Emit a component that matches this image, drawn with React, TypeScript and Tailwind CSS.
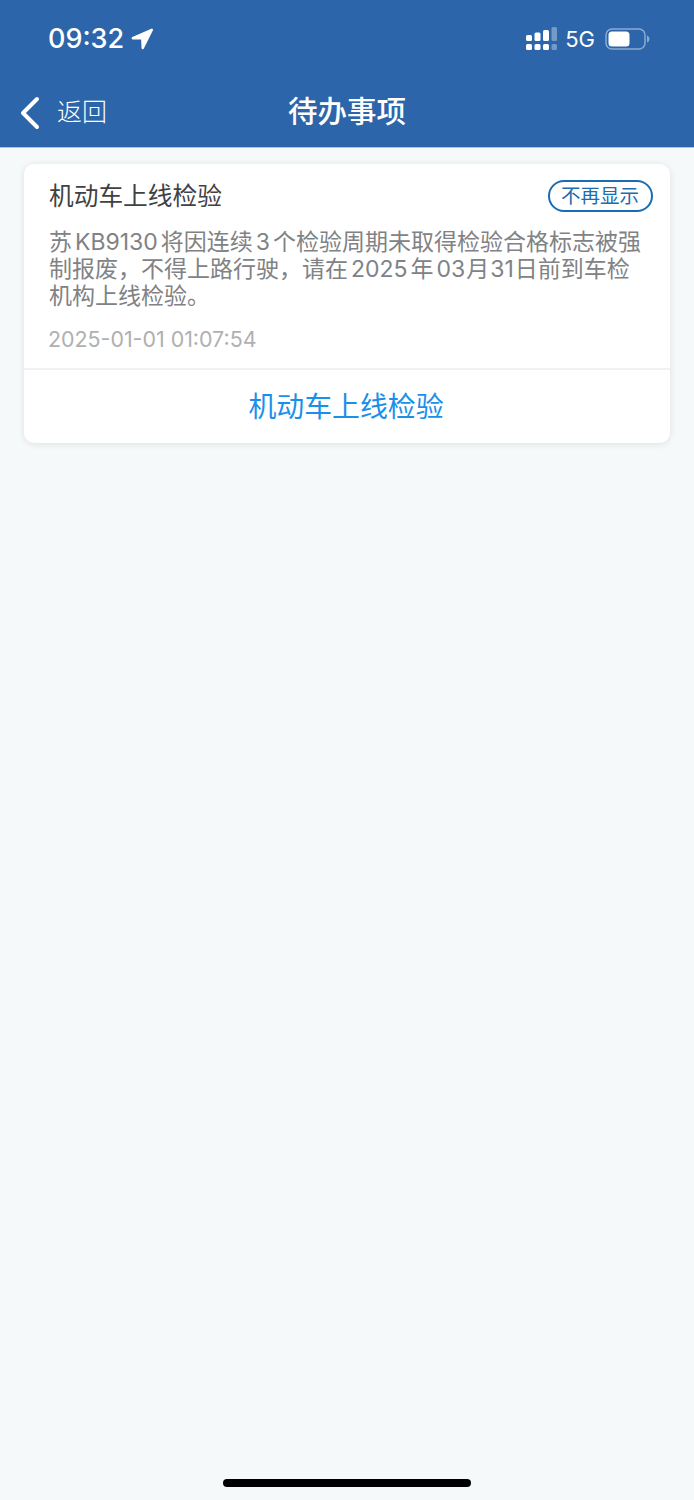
import React from 'react';

const FONT = "font-['Inter','Noto_Sans_CJK_SC',sans-serif]";

const SignalIcon = () => (
  <svg width="32" height="24" viewBox="0 0 32 24" fill="white">
    <rect x="0" y="8" width="6" height="6" rx="1.5" />
    <rect x="0" y="17" width="6" height="6" rx="1.5" />
    <rect x="8.5" y="5.5" width="6" height="8.5" rx="1.5" />
    <rect x="8.5" y="17" width="6" height="6" rx="1.5" />
    <rect x="17" y="3" width="6" height="11" rx="1.5" />
    <rect x="17" y="17" width="6" height="6" rx="1.5" />
    <rect x="25.5" y="0" width="5.5" height="14" rx="1.5" opacity="0.35" />
    <rect x="25.5" y="17" width="5.5" height="6" rx="1.5" opacity="0.35" />
  </svg>
);

const BatteryIcon = () => (
  <svg width="46" height="22" viewBox="0 0 46 22" fill="none">
    <rect x="2" y="1" width="39" height="20" rx="6" stroke="white" strokeOpacity="0.45" strokeWidth="1.5" />
    <rect x="4.5" y="3.5" width="21" height="15" rx="3.5" fill="white" />
    <path d="M43 7.5c1.5.5 2.5 2 2.5 3.5s-1 3-2.5 3.5z" fill="white" fillOpacity="0.45" />
  </svg>
);

const LocationArrow = () => (
  <svg width="22" height="22" viewBox="0 0 22 22" fill="white" stroke="white" strokeWidth="1.2" strokeLinejoin="round">
    <path d="M20.6 1.2 1.6 9.6c-.6.3-.4 1.2.3 1.2l8.9.2.3 9c0 .7.9.9 1.2.3L21.4 2c.2-.5-.3-1-.8-.8z" />
  </svg>
);

const BackChevron = () => (
  <svg width="22" height="34" viewBox="0 0 22 34" fill="none">
    <path d="M18 3 4 17l14 14" stroke="white" strokeWidth="4" strokeLinecap="round" strokeLinejoin="round" />
  </svg>
);

const App: React.FC = () => {
  return (
    <div className={`${FONT} flex h-[1500px] w-[694px] flex-col overflow-hidden bg-[#f5f9fa]`}>
      <header className="h-[148px] shrink-0 border-b border-[#a9c5e4] bg-[#2c65a9] text-white">
        <div className="flex h-[78px] items-center justify-between pb-[1px] pl-[48px] pr-[44px]">
          <div className="flex items-center gap-[7px]">
            <span className="text-[27px] font-medium leading-none">09:32</span>
            <LocationArrow />
          </div>
          <div className="flex items-center">
            <SignalIcon />
            <span className="ml-[7px] mr-[9px] text-[22px] leading-none">5G</span>
            <BatteryIcon />
          </div>
        </div>
        <div className="relative flex h-[69px] items-center pl-[19px]">
          <BackChevron />
          <span className="ml-[16px] text-[25px] font-light leading-none">返回</span>
          <h1 className="absolute inset-x-0 top-[14px] text-center text-[29.5px] font-medium leading-[38px]">待办事项</h1>
        </div>
      </header>

      <main className="px-[24px] pt-[16px]">
        <section className="h-[279px] rounded-[10px] bg-white shadow-[0_1px_7px_rgba(0,0,0,0.1)]">
          <div className="h-[206px] border-b-2 border-[#f0f1f2] pl-[25px] pr-[17px]">
            <div className="flex items-start justify-between pt-[16px]">
              <h2 className="text-[24.7px] leading-[33px] text-[#3f4245]">机动车上线检验</h2>
              <button className="h-[32px] w-[105px] rounded-full border-2 border-[#1a6db0] pr-[1px] text-[19.5px] leading-[27px] text-[#1a6db0]">
                不再显示
              </button>
            </div>
            <p className="mt-[16px] w-[600px] text-[23px] leading-[27px] text-[#808285]">
              苏<span className="mx-[3px]">KB9130</span>将因连续<span className="mx-[3px]">3</span>个检验周期未取得检验合格标志被强
              <br />
              制报废，不得上路行驶，请在<span className="mx-[3px]">2025</span>年<span className="ml-[3px] mr-[1px]">03</span>月<span className="mx-[1px]">31</span>日前到车检
              <br />
              机构上线检验。
            </p>
            <p className="-ml-[1px] mt-[15px] text-[21.4px] leading-[28px] text-[#aeb0b2]">2025-01-01 01:07:54</p>
          </div>
          <button className="flex h-[71px] w-full items-center justify-center pr-[2px] pt-[5px] text-[27.9px] text-[#1a90e8]">
            机动车上线检验
          </button>
        </section>
      </main>

      <div className="mt-auto flex justify-center pb-[13px]">
        <div className="h-[8px] w-[248px] rounded-full bg-black" />
      </div>
    </div>
  );
};

export default App;
